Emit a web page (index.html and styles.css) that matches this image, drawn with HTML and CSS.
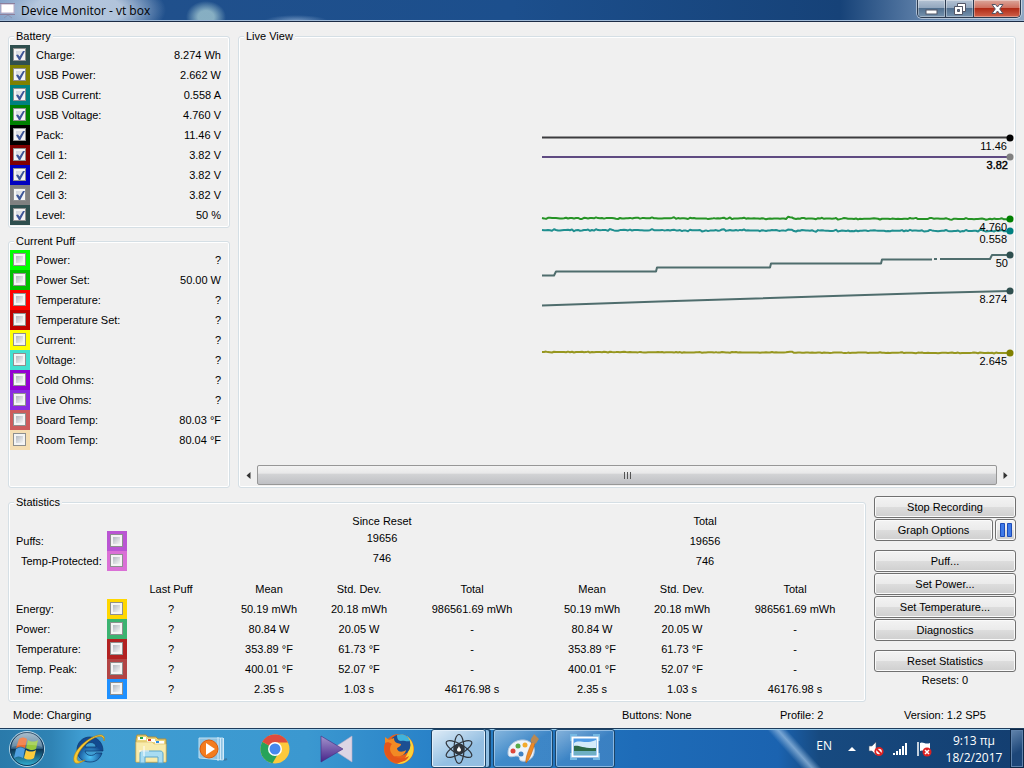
FILE: index.html
```
<!DOCTYPE html>
<html lang="en">
<head>
    <meta charset="UTF-8">
    <meta name="viewport" content="width=device-width, initial-scale=1.0">
    <title>Device Monitor - vt box</title>
    <link rel="stylesheet" href="styles.css">
</head>
<body>

    <header class="title-bar">
        <svg class="title-icon" width="16" height="16" viewBox="0 0 16 16">
            <path d="M4 15l4-3 4 3" fill="none" stroke="#8a93b0"/>
            <rect x="1" y="1" width="13" height="9" fill="#fff" stroke="#b9a9c4"/>
            <path d="M0 .5h15M0 11.5h15" stroke="#8c7f9c"/>
        </svg>
        <h1>Device Monitor - vt box</h1>
        <div class="window-buttons">
            <button class="win-btn" aria-label="Minimize">
                <svg width="13" height="12" viewBox="0 0 13 12"><rect x="1" y="7" width="11" height="4" fill="#fff" stroke="#535666"/></svg>
            </button>
            <button class="win-btn" aria-label="Restore">
                <svg width="13" height="12" viewBox="0 0 13 12">
                    <path d="M4.500.5h8v8h-3v-5h-5z" fill="#fff" stroke="#535666"/>
                    <path d="M1.500 3.500h8v8h-8zM4.500 6.500v2h2v-2z" fill="#fff" fill-rule="evenodd" stroke="#535666"/>
                </svg>
            </button>
            <button class="win-btn close-btn" aria-label="Close">
                <svg width="13" height="12" viewBox="0 0 13 12"><path d="M1 1.500h3.500l2 2.500 2-2.500H12L8.700 6l3.300 4.500H8.500l-2-2.500-2 2.500H1L4.300 6z" fill="#fff" stroke="#535666"/></svg>
            </button>
        </div>
    </header>

    <main class="monitor">
        <div class="top-area">
            <div class="readings">
                <fieldset class="group">
                    <legend>Battery</legend>
                    <label class="reading"><span class="swatch slate"><input type="checkbox" checked></span>Charge:<output>8.274 Wh</output></label>
                    <label class="reading"><span class="swatch olive"><input type="checkbox" checked></span>USB Power:<output>2.662 W</output></label>
                    <label class="reading"><span class="swatch teal"><input type="checkbox" checked></span>USB Current:<output>0.558 A</output></label>
                    <label class="reading"><span class="swatch green"><input type="checkbox" checked></span>USB Voltage:<output>4.760 V</output></label>
                    <label class="reading"><span class="swatch black"><input type="checkbox" checked></span>Pack:<output>11.46 V</output></label>
                    <label class="reading"><span class="swatch maroon"><input type="checkbox" checked></span>Cell 1:<output>3.82 V</output></label>
                    <label class="reading"><span class="swatch blue"><input type="checkbox" checked></span>Cell 2:<output>3.82 V</output></label>
                    <label class="reading"><span class="swatch gray"><input type="checkbox" checked></span>Cell 3:<output>3.82 V</output></label>
                    <label class="reading"><span class="swatch slate"><input type="checkbox" checked></span>Level:<output>50 %</output></label>
                </fieldset>

                <fieldset class="group puff-group">
                    <legend>Current Puff</legend>
                    <label class="reading"><span class="swatch lime"><input type="checkbox"></span>Power:<output>?</output></label>
                    <label class="reading"><span class="swatch mid-green"><input type="checkbox"></span>Power Set:<output>50.00 W</output></label>
                    <label class="reading"><span class="swatch red"><input type="checkbox"></span>Temperature:<output>?</output></label>
                    <label class="reading"><span class="swatch dark-red"><input type="checkbox"></span>Temperature Set:<output>?</output></label>
                    <label class="reading"><span class="swatch yellow"><input type="checkbox"></span>Current:<output>?</output></label>
                    <label class="reading"><span class="swatch turquoise"><input type="checkbox"></span>Voltage:<output>?</output></label>
                    <label class="reading"><span class="swatch violet"><input type="checkbox"></span>Cold Ohms:<output>?</output></label>
                    <label class="reading"><span class="swatch blue-violet"><input type="checkbox"></span>Live Ohms:<output>?</output></label>
                    <label class="reading"><span class="swatch indian-red"><input type="checkbox"></span>Board Temp:<output>80.03 °F</output></label>
                    <label class="reading"><span class="swatch wheat"><input type="checkbox"></span>Room Temp:<output>80.04 °F</output></label>
                </fieldset>
            </div>

            <fieldset class="group live-view">
                <legend>Live View</legend>
                <svg class="chart" id="chart" viewBox="0 0 776 422" preserveAspectRatio="xMaxYMin meet">
                    <g id="lines" fill="none" stroke-width="2" stroke-linejoin="round">
                        <path d="M303 94.500H771" stroke="#3c3c3e"/>
                        <path d="M303 114H771" stroke="#5f4b82"/>
                        <path d="M303 232.500h12l2-4h100l1-4h113l1-4h110l1-4h50M695 216h3M701 216h50l2-4h18" stroke="#4f6d6d"/>
                        <path d="M303 262.500L420 258.500L610 252.500L690 250L771 248" stroke="#4f6d6d"/>
                    </g>
                    <g>
                        <circle cx="771" cy="95" r="3.500" fill="#000"/>
                        <circle cx="771" cy="114" r="3.500" fill="#808080"/>
                        <circle cx="771" cy="176" r="3.500" fill="#008000"/>
                        <circle cx="771" cy="188" r="3.500" fill="#008080"/>
                        <circle cx="771" cy="212" r="3.500" fill="#2f4f4f"/>
                        <circle cx="771" cy="248" r="3.500" fill="#2f4f4f"/>
                        <circle cx="771" cy="310" r="3.500" fill="#808000"/>
                    </g>
                    <g class="chart-labels">
                        <text x="768" y="107">11.46</text>
                        <text x="769" y="126" class="strong">3.82</text>
                        <text x="768" y="188">4.760</text>
                        <text x="768" y="200">0.558</text>
                        <text x="769" y="224">50</text>
                        <text x="768" y="260">8.274</text>
                        <text x="768" y="322">2.645</text>
                    </g>
                </svg>
                <div class="scrollbar">
                    <button class="scroll-arrow" aria-label="Scroll left"><svg width="5" height="7" viewBox="0 0 5 7"><path d="M4.500 0v7L.5 3.500z" fill="#333"/></svg></button>
                    <button class="scroll-thumb" aria-label="Scroll position"><svg width="9" height="7" viewBox="0 0 9 7"><path d="M1.500 0v7M4.500 0v7M7.500 0v7" stroke="#555"/></svg></button>
                    <button class="scroll-arrow" aria-label="Scroll right"><svg width="5" height="7" viewBox="0 0 5 7"><path d="M.5 0v7l4-3.500z" fill="#333"/></svg></button>
                </div>
            </fieldset>
        </div>

        <div class="bottom-area">
            <fieldset class="group statistics">
                <legend>Statistics</legend>
                <table>
                    <colgroup>
                        <col class="col-name"><col class="col-swatch"><col class="col-last">
                        <col class="col-mean"><col class="col-dev"><col class="col-total">
                        <col class="col-mean-all"><col class="col-dev-all"><col>
                    </colgroup>
                    <tbody>
                        <tr><td colspan="3"></td><th colspan="3">Since Reset</th><th colspan="3">Total</th></tr>
                        <tr><th class="name"><label for="puffs">Puffs:</label></th><td><span class="swatch orchid"><input type="checkbox" id="puffs"></span></td><td></td><td colspan="3" class="since">19656</td><td colspan="3">19656</td></tr>
                        <tr><th class="name sub"><label for="protected">Temp-Protected:</label></th><td><span class="swatch pink"><input type="checkbox" id="protected"></span></td><td></td><td colspan="3" class="since">746</td><td colspan="3">746</td></tr>
                    </tbody>
                    <tbody>
                        <tr class="heads"><td></td><td></td><th>Last Puff</th><th>Mean</th><th>Std. Dev.</th><th>Total</th><th>Mean</th><th>Std. Dev.</th><th>Total</th></tr>
                        <tr><th class="name"><label for="energy">Energy:</label></th><td><span class="swatch gold"><input type="checkbox" id="energy"></span></td><td>?</td><td>50.19 mWh</td><td>20.18 mWh</td><td>986561.69 mWh</td><td>50.19 mWh</td><td>20.18 mWh</td><td>986561.69 mWh</td></tr>
                        <tr><th class="name"><label for="power">Power:</label></th><td><span class="swatch sea-green"><input type="checkbox" id="power"></span></td><td>?</td><td>80.84 W</td><td>20.05 W</td><td>-</td><td>80.84 W</td><td>20.05 W</td><td>-</td></tr>
                        <tr><th class="name"><label for="temperature">Temperature:</label></th><td><span class="swatch firebrick"><input type="checkbox" id="temperature"></span></td><td>?</td><td>353.89 °F</td><td>61.73 °F</td><td>-</td><td>353.89 °F</td><td>61.73 °F</td><td>-</td></tr>
                        <tr><th class="name"><label for="peak">Temp. Peak:</label></th><td><span class="swatch brick"><input type="checkbox" id="peak"></span></td><td>?</td><td>400.01 °F</td><td>52.07 °F</td><td>-</td><td>400.01 °F</td><td>52.07 °F</td><td>-</td></tr>
                        <tr><th class="name"><label for="time">Time:</label></th><td><span class="swatch dodger"><input type="checkbox" id="time"></span></td><td>?</td><td>2.35 s</td><td>1.03 s</td><td>46176.98 s</td><td>2.35 s</td><td>1.03 s</td><td>46176.98 s</td></tr>
                    </tbody>
                </table>
            </fieldset>

            <div class="actions">
                <button class="btn">Stop Recording</button>
                <div class="btn-row">
                    <button class="btn">Graph Options</button>
                    <button class="btn pause-btn" aria-label="Pause"><svg width="14" height="14" viewBox="0 0 14 14"><path d="M1.500.5h4v13h-4zM8.500.5h4v13h-4z" fill="#3f7ae8" stroke="#1d4bb8"/></svg></button>
                </div>
                <button class="btn spaced">Puff...</button>
                <button class="btn">Set Power...</button>
                <button class="btn">Set Temperature...</button>
                <button class="btn">Diagnostics</button>
                <button class="btn spaced">Reset Statistics</button>
                <p>Resets: 0</p>
            </div>
        </div>

        <div class="status-bar">
            <span>Mode: Charging</span>
            <span>Buttons: None</span>
            <span>Profile: 2</span>
            <span>Version: 1.2 SP5</span>
        </div>
    </main>

    <footer class="taskbar">
        <button class="start-btn" aria-label="Start">
            <svg width="38" height="38" viewBox="0 0 38 38">
                <defs>
                    <linearGradient id="orb" x2="0" y2="1"><stop offset="0" stop-color="#9cb4c4"/><stop offset=".48" stop-color="#3c6a8c"/><stop offset=".5" stop-color="#0c3352"/><stop offset="1" stop-color="#35b6d8"/></linearGradient>
                </defs>
                <circle cx="19" cy="19" r="17.500" fill="url(#orb)" stroke="#b5d4e4"/>
                <circle cx="19" cy="19" r="16.500" fill="none" stroke="#12385a"/>
                <path d="M11 9c3-2 5-2 8 0l-2 9c-3-2-6-2-9 0z" fill="#ee6b2c"/>
                <path d="M20 10c3 2 7 2 10 0l-2 9c-3 2-7 1-10-1z" fill="#96c83c"/>
                <path d="M8 19c3-2 6-2 9 0l-2 9c-3-2-6-2-9 0z" fill="#4f9fe0"/>
                <path d="M18 20c3 2 7 2 10 0l-2 8c-3 2-7 2-10 0z" fill="#fccb3c"/>
                <path d="M4 17a15 15 0 0 1 30 0c-9-3-20-3-30 0z" fill="#fff" opacity=".2"/>
            </svg>
        </button>
        <button class="task" aria-label="Internet Explorer">
            <svg width="34" height="32" viewBox="0 0 34 32">
                <defs><radialGradient id="ie" cy=".8"><stop offset="0" stop-color="#4cc2f6"/><stop offset="1" stop-color="#124a90"/></radialGradient></defs>
                <path d="M18 4c8 0 13 6 13 14H13c1 5 8 6 11 2h6c-2 6-6 9-12 9-8 0-13-5-13-12S10 4 18 4zM13 14h11c0-6-10-6-11 0z" fill="url(#ie)" fill-rule="evenodd" stroke="#0c356c" stroke-width=".7"/>
                <path d="M32 8c2-7-4-8-13-3C8 11 0 22 2 28c1 4 7 2 11-1-5 2-8 2-8-2 1-7 9-16 17-20 6-3 10-2 10 3z" fill="#f8ca35" stroke="#b98208" stroke-width=".6"/>
            </svg>
        </button>
        <button class="task" aria-label="Windows Explorer">
            <svg width="34" height="32" viewBox="0 0 34 32">
                <path d="M2 6l1-4h9l2 2h8l2 2h8v23H2z" fill="#ecd67c" stroke="#b08f3c"/>
                <path d="M4 4h8v3H4zM13 6h8v3h-8zM21 8h9v3h-9z" fill="#fff"/>
                <path d="M6 4h3v2H6z" fill="#18a548"/><path d="M14 6h3v2h-3z" fill="#d83c2c"/><path d="M22 8h3v2h-3z" fill="#2c8be0"/>
                <path d="M2 9h16l2 2h12v18H2z" fill="#f8ebac" stroke="#dcc06a" stroke-width=".7"/>
                <path d="M6 30V21c0-2 1-3 3-3h17c2 0 3 1 3 3v9h-5v-6H11v6z" fill="#a8dcf2" stroke="#5aa6cc"/>
                <path d="M10 13v10M5 18h10" stroke="#fff"/>
            </svg>
        </button>
        <button class="task" aria-label="Media Player">
            <svg width="34" height="32" viewBox="0 0 34 32">
                <path d="M3 5h24v22l-24-2z" fill="#8ec2e2" stroke="#bfe0f2"/>
                <path d="M22 4v24M24.500 5v22M27.500 5v22" stroke="#d2eafa"/>
                <path d="M28 27l3-1" stroke="#3a7ca8" stroke-width="2"/>
                <circle cx="13" cy="16" r="9" fill="#f37c1f" stroke="#d85c10"/>
                <path d="M10 10l9 6-9 6z" fill="#fff"/>
            </svg>
        </button>
        <button class="task" aria-label="Chrome">
            <svg width="34" height="32" viewBox="0 0 34 32">
                <circle cx="17" cy="16" r="14.500" fill="#fbc93c"/>
                <path d="M17 16L4.400 8.800A14.500 14.500 0 0 0 14.500 30.300L21 19z" fill="#27a35a"/>
                <path d="M17 16L4.400 8.800A14.500 14.500 0 0 1 30 9.500H17z" fill="#dd4b3e"/>
                <circle cx="17" cy="16" r="7" fill="#fff"/>
                <circle cx="17" cy="16" r="5.500" fill="#4688ee"/>
            </svg>
        </button>
        <button class="task" aria-label="KMPlayer">
            <svg width="34" height="32" viewBox="0 0 34 32">
                <defs><linearGradient id="km" x2="0" y2="1"><stop offset="0" stop-color="#a394cc"/><stop offset="1" stop-color="#47248a"/></linearGradient></defs>
                <path d="M32 3v26L12 16z" fill="#dcd5e4" stroke="#b6abc6" stroke-width=".6"/>
                <path d="M1 3l22 13L1 29z" fill="url(#km)" stroke="#452a80" stroke-width=".6"/>
            </svg>
        </button>
        <button class="task" aria-label="Firefox">
            <svg width="34" height="32" viewBox="0 0 34 32">
                <circle cx="17" cy="16" r="15" fill="#ea5f1a"/>
                <path d="M25 3c9 7 9 20-1 26-3 2-7 2-9 2 12-5 14-17 10-28z" fill="#fbd238"/>
                <circle cx="18" cy="12" r="10.500" fill="#1c4f92"/>
                <path d="M15 2c6-2 11 1 13 6-4 1-6-1-9 0-3 0-4-3-4-6z" fill="#3fb3dc"/>
                <path d="M3 11l0-7 4 3 5-2c0 3 1 4 3 5l4 1c0 3-4 3-4 5 2 4 6 3 9 1-1 5-5 7-10 6l-6 2z" fill="#f28a24"/>
                <path d="M3 10c-2 8 2 17 11 19 6 1 11-1 13-6-6 4-14 3-17-2-3-4-2-8 0-10-3-2-5-2-7-1z" fill="#e4561a"/>
            </svg>
        </button>
        <button class="task open active" aria-label="Device Monitor">
            <svg width="34" height="32" viewBox="0 0 34 32">
                <g fill="none" stroke="#30353c" stroke-width="1.200">
                    <ellipse cx="17" cy="16" rx="5" ry="14.500"/>
                    <ellipse cx="17" cy="16" rx="5" ry="14.500" transform="rotate(60 17 16)"/>
                    <ellipse cx="17" cy="16" rx="5" ry="14.500" transform="rotate(-60 17 16)"/>
                </g>
                <circle cx="17" cy="16" r="5.500" fill="#30353c"/>
                <path d="M17 12c0 3 2 3 2 5s-4 2-4 0 2-2 2-5z" fill="#fff"/>
            </svg>
        </button>
        <button class="task open" aria-label="Paint">
            <svg width="34" height="32" viewBox="0 0 34 32">
                <path d="M15 7c8-1 15 5 13 13-1 6-7 9-12 8-4 0-1-5-5-5s-9 3-9-3C2 13 7 8 15 7z" fill="#eef3fa" stroke="#b7c9dd"/>
                <circle cx="7" cy="18" r="2.500" fill="#dd4539"/><circle cx="12" cy="13" r="2.500" fill="#55aa48"/><circle cx="19" cy="12" r="2.500" fill="#f3aa2c"/><circle cx="15" cy="21" r="2.500" fill="#4182c4"/>
                <path d="M20 30c-1-5 3-14 6-21l3 1c-2 7-5 16-9 20z" fill="#ee8a24" stroke="#b45b12" stroke-width=".5"/>
                <path d="M25 9c-1-4 2-5 3-8l5 5c-2 2-2 4-4 5z" fill="#b98953"/>
            </svg>
        </button>
        <button class="task open" aria-label="Photo Viewer">
            <svg width="34" height="32" viewBox="0 0 34 32">
                <path d="M3 8V2h6M25 2h6v6M31 20v6h-6M9 26H3v-6" fill="none" stroke="#75b9e4" stroke-width="2"/>
                <rect x="4.500" y="4.500" width="25" height="19" fill="#4f9be6" stroke="#fff" stroke-width="2"/>
                <path d="M6 10c6-4 10 2 22-3v8H6z" fill="#d4ebfa"/>
                <path d="M6 13c5-1 10 3 22 2v3H6z" fill="#2d6a48"/>
                <path d="M6 18h22v4H6z" fill="#6fb0c4"/>
            </svg>
        </button>

        <div class="tray">
            <span class="lang">EN</span>
            <button aria-label="Show hidden icons"><svg width="8" height="4" viewBox="0 0 8 4"><path d="M0 4l4-4 4 4z" fill="#fff"/></svg></button>
            <button class="volume" aria-label="Volume muted"><svg width="16" height="16" viewBox="0 0 16 16"><path d="M1 5h3l4-4v13l-4-4H1z" fill="#fff" stroke="#4c6074" stroke-width=".6"/><circle cx="11" cy="10.500" r="3.700" fill="#fff" stroke="#dd2222" stroke-width="1.800"/><path d="M8.500 8l5 5" stroke="#dd2222" stroke-width="1.800"/></svg></button>
            <button aria-label="Network"><svg width="16" height="14" viewBox="0 0 16 14"><path d="M1 11h2v2H1zM4 9h2v4H4zM7 7h2v6H7zM10 4h2v9h-2zM13 1h2v12h-2z" fill="#fff"/></svg></button>
            <button aria-label="Action Center"><svg width="16" height="16" viewBox="0 0 16 16"><path d="M2 1v14" stroke="#fff" stroke-width="1.500"/><path d="M4 2c3-2 5 2 10 0v8c-4 2-7-2-10 0z" fill="#fff"/><circle cx="11" cy="11" r="4.500" fill="#dd2222"/><path d="M9 9l4 4M13 9l-4 4" stroke="#fff" stroke-width="1.500"/></svg></button>
            <time class="clock" datetime="2017-02-18T21:13">9:13 πμ<br>18/2/2017</time>
        </div>
        <button class="show-desktop" aria-label="Show desktop"></button>
    </footer>

    <script>
        // Series with a small measurement jitter around a base level
        const noisySeries = [
            { color: '#259325', y: 175, drift: 1, amp: 1 },
            { color: '#1f8f8f', y: 187, drift: 1, amp: 1.2 },
            { color: '#96961f', y: 309, drift: 1, amp: 0.6 }
        ];
        const lines = document.getElementById('lines');

        noisySeries.forEach((series, n) => {
            const points = [];
            for (let x = 303; x <= 771; x += 2) {
                const jitter = Math.sin(x * 0.17 + n) * Math.sin(x * 1.13) * Math.cos(x * x * 0.31) * series.amp;
                const bump = x > 548 && x < 554 ? -1 : 0;
                const y = series.y + series.drift * (x - 303) / 468 + jitter + bump;
                points.push(x + ',' + y.toFixed(1));
            }
            const line = document.createElementNS('http://www.w3.org/2000/svg', 'polyline');
            line.setAttribute('points', points.join(' '));
            line.setAttribute('stroke', series.color);
            lines.appendChild(line);
        });
    </script>

</body>
</html>
```
FILE: styles.css
```
:root {
    --face: #f0f0f0;
    --group-border: #d5dfe5;
    --font-ui: "Liberation Sans", Arial, sans-serif;
    --font-shell: "Open Sans", "Noto Sans", sans-serif;
}

* {
    box-sizing: border-box;
}

body {
    margin: 0;
    min-height: 100vh;
    display: flex;
    flex-direction: column;
    background-color: var(--face);
    color: #000;
    font-family: var(--font-ui);
    font-size: 11px;
    line-height: 14px;
}

button {
    font: inherit;
    color: inherit;
    padding: 0;
}

/* Title bar */
.title-bar {
    display: flex;
    align-items: flex-start;
    height: 22px;
    padding: 0 3px 0 0;
    border-bottom: 1px solid #1b2b45;
    box-shadow: inset 0 -1px 0 #9fb9d6;
    background:
        radial-gradient(ellipse 88px 34px at 78px 10px, rgba(190, 206, 226, 0.9) 50%, transparent),
        radial-gradient(ellipse 20px 16px at 206px 17px, rgba(160, 198, 208, 0.8) 40%, transparent),
        radial-gradient(ellipse 32px 6px at 296px 21px, rgba(150, 180, 215, 0.7), transparent),
        linear-gradient(90deg, #7d9dc6 0, #20508c 16%, #1c4f8d 50%, #164278 82%, #5d7fa8 90%, #8ea8c4 100%);
}

.title-icon {
    margin: 3px 5px 0 0;
}

.title-bar h1 {
    margin: 2px 0 0;
    font-family: var(--font-shell);
    font-size: 12px;
    font-weight: 400;
    line-height: 18px;
}

.window-buttons {
    display: flex;
    margin-left: auto;
    height: 18px;
    border: 1px solid #2c3b50;
    border-top: 0;
    border-radius: 0 0 5px 5px;
    overflow: hidden;
    box-shadow: 0 0 0 1px rgba(255, 255, 255, 0.5);
}

.win-btn {
    display: flex;
    align-items: center;
    justify-content: center;
    width: 28px;
    border: 0;
    border-right: 1px solid #2c3b50;
    background: linear-gradient(#b4c3d4 0, #93a7be 45%, #52708f 50%, #7592ae 100%);
    box-shadow: inset 0 0 0 1px rgba(255, 255, 255, 0.35);
}

.close-btn {
    width: 46px;
    border-right: 0;
    background: linear-gradient(#dba79b 0, #cf7160 45%, #b02b16 50%, #d0624a 100%);
}

/* Main window */
.monitor {
    flex: 1;
    display: flex;
    flex-direction: column;
    padding: 7px 8px 6px;
}

.group {
    min-width: 0;
    margin: 0;
    padding: 2px 1px;
    border: 1px solid var(--group-border);
    border-radius: 3px;
    box-shadow: inset 0 0 0 1px #fff;
}

.group legend {
    margin-left: 4px;
    padding: 0 2px;
    background-color: var(--face);
}

.top-area {
    flex: 1;
    display: grid;
    grid-template-columns: 222px 1fr;
    gap: 8px;
    margin-bottom: 7px;
}

.readings {
    display: flex;
    flex-direction: column;
    gap: 6px;
}

.puff-group {
    flex: 1;
}

.reading {
    display: flex;
    align-items: center;
    height: 20px;
    padding-right: 7px;
}

.reading .swatch {
    margin-right: 6px;
}

.reading output {
    margin-left: auto;
}

/* Colour key behind each tick box */
.swatch {
    display: flex;
    align-items: flex-start;
    padding: 3px 0 0 3px;
    width: 20px;
    height: 20px;
}

.swatch input {
    appearance: none;
    margin: 0;
    width: 13px;
    height: 13px;
    border: 1px solid #8e8f8f;
    background: linear-gradient(135deg, #b4bac2, #f4f4f4) content-box, #f4f4f4;
    padding: 2px;
    display: grid;
    place-items: center;
}

.swatch input:checked {
    background: linear-gradient(135deg, #d2d6dc, #f6f6f6) content-box, #f4f4f4;
}

.swatch input:checked::before {
    content: "";
    width: 9px;
    height: 9px;
    background-color: #3f5799;
    clip-path: polygon(0 45%, 22% 38%, 40% 62%, 78% 0, 100% 0, 48% 100%, 32% 100%);
}

.slate { background-color: #2f4f4f; }
.olive { background-color: #808000; }
.teal { background-color: #008080; }
.green { background-color: #008000; }
.black { background-color: #000; }
.maroon { background-color: #800000; }
.blue { background-color: #0000c0; }
.gray { background-color: #808080; }
.lime { background-color: #00ff00; }
.mid-green { background-color: #00c000; }
.red { background-color: #ff0000; }
.dark-red { background-color: #c00000; }
.yellow { background-color: #ffff00; }
.turquoise { background-color: #40e0d0; }
.violet { background-color: #9400d3; }
.blue-violet { background-color: #8a2be2; }
.indian-red { background-color: #cd5c5c; }
.wheat { background-color: #f5deb3; }
.orchid { background-color: #ba55d3; }
.pink { background-color: #da70d6; }
.gold { background-color: #ffd700; }
.sea-green { background-color: #3cb371; }
.firebrick { background-color: #b22222; }
.brick { background-color: #b24545; }
.dodger { background-color: #1e90ff; }

/* Live view */
.live-view {
    display: grid;
    grid-template-rows: 1fr auto;
    padding: 0 0 2px;
}

.live-view legend {
    margin-left: 5px;
}

.chart {
    display: block;
    width: 100%;
}

.chart-labels {
    text-anchor: end;
}

.chart-labels .strong {
    stroke: #000;
    stroke-width: 0.4px;
}

.scrollbar {
    display: flex;
    height: 20px;
    margin: 0 1px;
    background: linear-gradient(#e6e6e6, #f4f4f4);
}

.scroll-arrow {
    display: grid;
    place-items: center;
    width: 17px;
    border: 0;
    background-color: var(--face);
}

.scroll-thumb {
    flex: 1;
    display: grid;
    place-items: center;
    border: 1px solid #979797;
    border-radius: 2px;
    background: linear-gradient(#f3f3f3 0, #e8e8e9 40%, #d2d3d5 45%, #bfc0c4 100%);
}

/* Statistics */
.bottom-area {
    display: grid;
    grid-template-columns: 1fr 142px;
    gap: 8px;
}

.statistics {
    padding: 2px 4px 2px 0;
}

.statistics legend {
    margin-left: 5px;
}

.statistics table {
    width: 100%;
    table-layout: fixed;
    border-collapse: collapse;
    text-align: center;
}

.statistics td,
.statistics th {
    height: 20px;
    padding: 0;
    font-weight: 400;
}

.statistics .name {
    padding-left: 7px;
    text-align: left;
    white-space: nowrap;
}

.statistics .sub {
    padding-left: 12px;
}

.statistics .since {
    padding-bottom: 6px;
}

.statistics .heads > * {
    height: 28px;
    padding-top: 8px;
}

.col-name { width: 98px; }
.col-swatch { width: 20px; }
.col-last { width: 88px; }
.col-mean { width: 108px; }
.col-dev { width: 72px; }
.col-total { width: 154px; }
.col-mean-all { width: 86px; }
.col-dev-all { width: 94px; }

/* Action buttons */
.actions {
    display: flex;
    flex-direction: column;
    gap: 1px;
    padding-top: 1px;
}

.btn {
    height: 22px;
    border: 1px solid #707070;
    border-radius: 3px;
    background: linear-gradient(#f3f3f3 0, #ebebeb 48%, #dddddd 50%, #cfcfcf 100%);
    box-shadow: inset 0 0 0 1px #fafafa;
}

.btn-row {
    display: grid;
    grid-template-columns: 1fr 21px;
    gap: 2px;
}

.pause-btn {
    display: grid;
    place-items: center;
}

.spaced {
    margin-top: 8px;
}

.actions p {
    margin: 0;
    text-align: center;
}

.status-bar {
    display: grid;
    grid-template-columns: 609px 158px 1fr 112px;
    margin-top: 6px;
    padding-left: 5px;
}

/* Taskbar */
.taskbar {
    display: flex;
    gap: 2px;
    height: 40px;
    border-top: 1px solid #1e3c5c;
    box-shadow: inset 0 1px 0 #9fd0ee;
    color: #fff;
    font-family: var(--font-shell);
    font-size: 12px;
    background:
        linear-gradient(48deg, transparent 42%, rgba(160, 195, 228, 0.7) 50%, transparent 57%) 745px 0 / 100px 40px no-repeat,
        linear-gradient(90deg, #2a7aaa 0, #2f83b4 5%, #3f9dd2 8%, #3b98d0 30%, #2982c8 42%, #1e6cb8 62%, #1b63b0 76%, #174a80 80%, #133e70 100%);
}

.taskbar button {
    display: flex;
    align-items: center;
    justify-content: center;
    border: 0;
    background: none;
}

.taskbar .start-btn {
    width: 54px;
    margin-right: 3px;
}

.taskbar .task {
    width: 60px;
}

.taskbar .open {
    border: 1px solid #1b4468;
    border-radius: 3px;
    background: linear-gradient(150deg, rgba(255, 255, 255, 0.45), rgba(255, 255, 255, 0.12) 50%);
    box-shadow: inset 0 0 0 1px rgba(190, 220, 245, 0.6);
}

/* Two stacked windows share this button */
.taskbar .active {
    width: 55px;
    margin-right: 5px;
    background: linear-gradient(150deg, rgba(255, 255, 255, 0.85), rgba(255, 255, 255, 0.5) 60%);
    box-shadow: inset 0 0 0 1px #e2effa, 4px 0 0 -1px #8fbfe4, 5px 0 0 #1b4468;
}

.tray {
    display: flex;
    align-items: center;
    gap: 8px;
    margin-left: auto;
}

.tray .lang {
    margin: 0 8px 6px 0;
}

.tray .volume {
    margin-left: 4px;
}

.clock {
    width: 68px;
    line-height: 17px;
    text-align: center;
}

.taskbar .show-desktop {
    width: 14px;
    border: 1px solid #0c2747;
    background: linear-gradient(150deg, #6285ad, #1d4678 60%);
    box-shadow: inset 0 0 0 1px #5f82ab;
}
```
